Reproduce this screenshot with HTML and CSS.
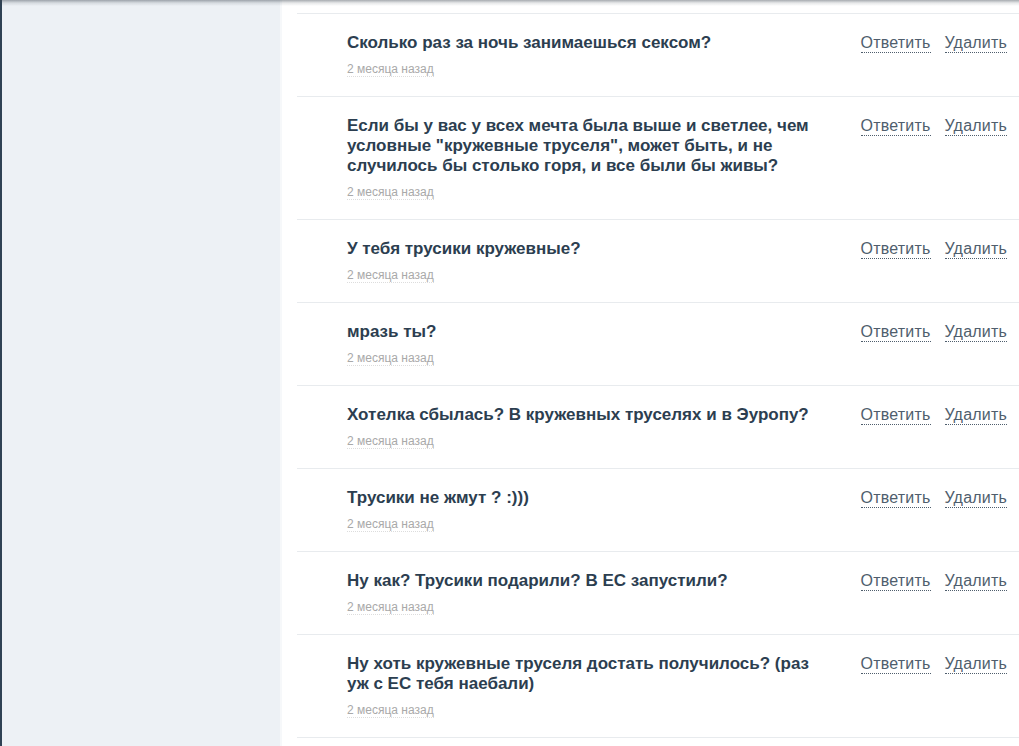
FILE: index.html
```html
<!DOCTYPE html>
<html lang="ru">
<head>
<meta charset="utf-8">
<title>Вопросы</title>
<link rel="stylesheet" href="styles.css">
</head>
<body>
<div class="topshadow"></div>
<div class="page">
  <aside class="sidebar"></aside>
  <main class="main">
    <ul class="questions">
      <li class="q">
        <div class="q-body">
          <div class="q-title">Сколько раз за ночь занимаешься сексом?</div>
          <div class="q-date"><span>2 месяца назад</span></div>
        </div>
        <div class="q-actions"><a class="act">Ответить</a><a class="act">Удалить</a></div>
      </li>
      <li class="q">
        <div class="q-body">
          <div class="q-title">Если бы у вас у всех мечта была выше и светлее, чем условные "кружевные труселя", может быть, и не случилось бы столько горя, и все были бы живы?</div>
          <div class="q-date"><span>2 месяца назад</span></div>
        </div>
        <div class="q-actions"><a class="act">Ответить</a><a class="act">Удалить</a></div>
      </li>
      <li class="q">
        <div class="q-body">
          <div class="q-title">У тебя трусики кружевные?</div>
          <div class="q-date"><span>2 месяца назад</span></div>
        </div>
        <div class="q-actions"><a class="act">Ответить</a><a class="act">Удалить</a></div>
      </li>
      <li class="q">
        <div class="q-body">
          <div class="q-title">мразь ты?</div>
          <div class="q-date"><span>2 месяца назад</span></div>
        </div>
        <div class="q-actions"><a class="act">Ответить</a><a class="act">Удалить</a></div>
      </li>
      <li class="q">
        <div class="q-body">
          <div class="q-title">Хотелка сбылась? В кружевных труселях и в Эуропу?</div>
          <div class="q-date"><span>2 месяца назад</span></div>
        </div>
        <div class="q-actions"><a class="act">Ответить</a><a class="act">Удалить</a></div>
      </li>
      <li class="q">
        <div class="q-body">
          <div class="q-title">Трусики не жмут ? :)))</div>
          <div class="q-date"><span>2 месяца назад</span></div>
        </div>
        <div class="q-actions"><a class="act">Ответить</a><a class="act">Удалить</a></div>
      </li>
      <li class="q">
        <div class="q-body">
          <div class="q-title">Ну как? Трусики подарили? В ЕС запустили?</div>
          <div class="q-date"><span>2 месяца назад</span></div>
        </div>
        <div class="q-actions"><a class="act">Ответить</a><a class="act">Удалить</a></div>
      </li>
      <li class="q">
        <div class="q-body">
          <div class="q-title">Ну хоть кружевные труселя достать получилось? (раз уж с ЕС тебя наебали)</div>
          <div class="q-date"><span>2 месяца назад</span></div>
        </div>
        <div class="q-actions"><a class="act">Ответить</a><a class="act">Удалить</a></div>
      </li>
    </ul>
  </main>
</div>
</body>
</html>
```
FILE: styles.css
```css
html, body {
  margin: 0;
  padding: 0;
  height: 100%;
  overflow: hidden;
}
body {
  font-family: "Liberation Sans", Arial, sans-serif;
  background: #ffffff;
}
.topshadow {
  position: fixed;
  top: 0;
  left: 0;
  right: 0;
  height: 6px;
  background: linear-gradient(to bottom, rgba(60,70,80,0.45), rgba(60,70,80,0.12) 50%, rgba(60,70,80,0));
  z-index: 5;
}
.page {
  display: flex;
  min-height: 100%;
}
.sidebar {
  width: 278px;
  flex: 0 0 278px;
  background: #edf1f5;
  border-left: 2px solid #2f4254;
  border-right: 2px solid #f6f8fa;
}
.main {
  flex: 1;
  padding: 13px 0 0 15px;
  background: #ffffff;
}
.questions {
  list-style: none;
  margin: 0;
  padding: 0;
  border-bottom: 1px solid #e8ebee;
}
.q {
  display: flex;
  align-items: flex-start;
  border-top: 1px solid #e8ebee;
  padding: 19px 12px 19px 50px;
}
.q-body {
  width: 478px;
}
.q-title {
  font-size: 17px;
  font-weight: bold;
  line-height: 20px;
  color: #2c3e50;
}
.q-date {
  margin-top: 8px;
  font-size: 12px;
  line-height: 16px;
  color: #a9a9a9;
}
.q-date span {
  border-bottom: 1px dotted #dddddd;
}
.q-actions {
  margin-left: auto;
  display: flex;
  gap: 14px;
  line-height: 20px;
}
.act {
  font-size: 16px;
  letter-spacing: 0.2px;
  color: #4f5e6d;
  text-decoration: none;
  border-bottom: 1px dotted #4f5e6d;
  line-height: 19px;
  cursor: pointer;
}
```
